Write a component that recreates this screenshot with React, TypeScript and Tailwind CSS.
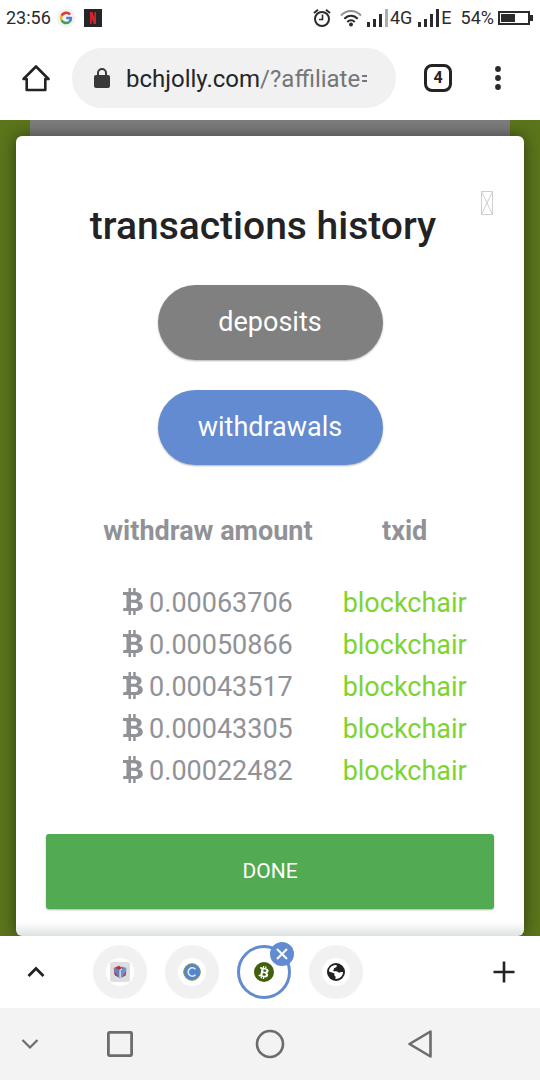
import React from "react";

const withdrawals = ["0.00063706", "0.00050866", "0.00043517", "0.00043305", "0.00022482"];

function BitcoinSign({ className }: { className: string }) {
  return (
    <svg viewBox="0 0 20 27" className={className} fill="currentColor" aria-hidden="true">
      <path
        fillRule="evenodd"
        d="M0 4H11.500C16 4 18.600 5.800 18.600 8.800C18.600 11 17.400 12.500 15 13.100C18.200 13.800 19.800 15.400 19.800 18C19.800 21.400 17 23 12.500 23H0L.5 20H2.200C3 20 3.500 19.700 3.500 19V8.200C3.500 7.300 2.900 7 2 7H0ZM8 7.200V11.800H10.500C13 11.800 14 11 14 9.500S13 7.200 10.500 7.200ZM8 14.800V20H11C13.800 20 15 19 15 17.400S13.800 14.800 11 14.800Z"
      />
      <path d="M5.500 0H8V4.500H5.500ZM10.200 0H12.700V4.500H10.200ZM5.500 22.500H8V27H5.500ZM10.200 22.500H12.700V27H10.200Z" />
    </svg>
  );
}

function SignalBars({ weak = false }: { weak?: boolean }) {
  return (
    <svg viewBox="0 0 23 18" className="h-[18px] w-[23px]" fill="#2b2b2d" aria-hidden="true">
      <rect x="0" y="13" width="3" height="5" />
      <rect x="6" y="10" width="3" height="8" />
      <rect x="12" y="5" width="3" height="13" />
      <rect x="18" y="0" width="3" height="18" fill={weak ? "#aeaeae" : "#2b2b2d"} />
    </svg>
  );
}

function StatusBar() {
  return (
    <div className="flex h-9 items-center justify-between px-[6px] text-lg text-[#2b2b2d]">
      <div className="flex items-center">
        <span className="w-[50px]">23:56</span>
        <svg viewBox="0 0 20 20" className="h-5 w-5" aria-hidden="true">
          <circle cx="10" cy="10" r="9.5" fill="#f3f3f3" />
          <g fill="none" strokeWidth="2.6">
            <path d="M14 6.6A5 5 0 0 0 5.6 7.8" stroke="#d8402f" />
            <path d="M5.6 7.8a5 5 0 0 0 0 4.4" stroke="#e9b63a" />
            <path d="M5.6 12.2a5 5 0 0 0 7.6 1.7" stroke="#3f9f55" />
            <path d="M13.2 13.9A4.8 4.8 0 0 0 14.9 10H10.2" stroke="#4f7fd0" />
          </g>
        </svg>
        <svg viewBox="0 0 18 18" className="ml-2 h-[18px] w-[18px]" aria-hidden="true">
          <rect width="18" height="18" fill="#26262a" />
          <path d="M6 3h2.400l2 5.500V3H12v12H9.800L7.700 9.500V15H6z" fill="#d52428" />
        </svg>
      </div>
      <div className="flex items-center">
        <svg viewBox="0 0 20 20" className="h-5 w-5" fill="none" stroke="#2b2b2d" strokeWidth="2" aria-hidden="true">
          <circle cx="10" cy="11" r="7" />
          <path d="M10.500 6.500V11.500H7" strokeWidth="1.600" />
          <path d="M2 5 6 1.800M18 5l-4-3.200" />
        </svg>
        <svg viewBox="0 0 22 18" className="ml-2 h-[18px] w-[22px]" fill="none" strokeWidth="2" aria-hidden="true">
          <path d="M1 6.500C6.500.500 15.500.500 21 6.500" stroke="#909090" />
          <path d="M4.300 9.800C8.200 5.600 13.800 5.600 17.700 9.800" stroke="#2b2b2d" />
          <path d="M7.300 13C9.500 10.700 12.500 10.700 14.700 13" stroke="#2b2b2d" />
          <circle cx="11" cy="15.500" r="2" fill="#2b2b2d" />
        </svg>
        <span className="ml-[5px] flex items-center"><SignalBars weak />4G</span>
        <span className="ml-[6px] flex items-center"><SignalBars />E</span>
        <span className="ml-[9px]">54%</span>
        <svg viewBox="0 0 36 14" className="ml-1 h-[14px] w-9" aria-hidden="true">
          <rect x="1" y="1" width="30" height="12" fill="#fff" stroke="#2b2b2d" strokeWidth="2" />
          <rect x="3" y="3" width="14" height="8" fill="#2b2b2d" />
          <rect x="32" y="4" width="3" height="6" fill="#2b2b2d" />
        </svg>
      </div>
    </div>
  );
}

function BrowserBar() {
  return (
    <header className="flex h-[84px] items-center pr-6">
      <button type="button" aria-label="Home" className="flex w-[72px] justify-center">
        <svg viewBox="0 0 28 28" className="h-7 w-7" fill="none" stroke="#232326" strokeWidth="2.600" strokeLinejoin="round" aria-hidden="true">
          <path d="M1.500 15 14 2.500 26.500 15H23.300V26H4.700V15z" />
        </svg>
      </button>
      <div className="flex h-[60px] min-w-0 flex-1 items-center rounded-full bg-[#f1f1f1] pl-[22px]">
        <svg viewBox="0 0 16 20" className="h-5 w-4 shrink-0" aria-hidden="true">
          <rect y="7" width="16" height="13" rx="2" fill="#39393c" />
          <path d="M4 8V5a4 4 0 0 1 8 0v3" fill="none" stroke="#39393c" strokeWidth="2" />
        </svg>
        <a href="#" className="ml-4 mr-[29px] flex-1 overflow-hidden whitespace-nowrap pt-[2px] text-2xl text-[#252528]">
          bchjolly.com<span className="text-[#75757a]">/?affiliate=</span>
        </a>
      </div>
      <button type="button" aria-label="Open tabs" className="ml-7 flex h-7 w-7 items-center justify-center rounded-lg border-3 border-[#232326] text-base font-bold text-[#232326]">
        4
      </button>
      <button type="button" aria-label="More options" className="ml-7 flex w-9 justify-center">
        <svg viewBox="0 0 6 24" className="h-6 w-[6px]" fill="#2b2b2d" aria-hidden="true">
          <circle cx="3" cy="3" r="2.900" />
          <circle cx="3" cy="12" r="2.900" />
          <circle cx="3" cy="21" r="2.900" />
        </svg>
      </button>
    </header>
  );
}

function HistoryCard() {
  return (
    <section className="relative flex flex-col items-center rounded-md bg-white bg-linear-to-t from-[#dfe2e2] to-white to-[14px] px-[30px] pb-[27px] shadow-[0_0_16px_rgba(0,0,0,0.5)]">
      <button type="button" aria-label="Close" className="absolute right-[31px] top-[55px]">
        <svg viewBox="0 0 12 24" className="h-6 w-3" fill="none" stroke="#cfcfcf" aria-hidden="true">
          <path d="M.5.5h11v23H.5zM.5.5l11 23M11.500.5l-11 23" />
        </svg>
      </button>
      <h1 className="mt-[65px] pr-[14px] text-[39px] leading-[50px] font-medium text-[#232326]">transactions history</h1>
      <button type="button" className="mt-[34px] h-[75px] w-[225px] rounded-full bg-[#808080] text-[27px] text-white shadow-[0_1px_2px_rgba(0,0,0,0.3)]">
        deposits
      </button>
      <button type="button" className="mt-[30px] h-[75px] w-[225px] rounded-full bg-[#638bd1] text-[27px] text-white shadow-[0_1px_2px_rgba(0,0,0,0.3)]">
        withdrawals
      </button>
      <table className="ml-[30px] mt-[45px] text-center text-[27px] leading-[42px] text-[#919297]">
        <thead>
          <tr>
            <th className="px-[15px] pb-[30px] font-bold">withdraw amount</th>
            <th className="px-[15px] pb-[30px] font-bold">txid</th>
          </tr>
        </thead>
        <tbody>
          {withdrawals.map((amount) => (
            <tr key={amount}>
              <td className="px-[15px]">
                <span className="flex items-center justify-center gap-[6px]">
                  <BitcoinSign className="mb-[3px] h-[27px] w-5" />
                  {amount}
                </span>
              </td>
              <td className="px-[15px]">
                <a href="#" className="text-[#7fd32f]">blockchair</a>
              </td>
            </tr>
          ))}
        </tbody>
      </table>
      <button type="button" className="mt-[42px] h-[75px] w-full rounded-[3px] bg-[#52aa52] text-[21px] text-white shadow-[0_1px_2px_rgba(0,0,0,0.3)]">
        DONE
      </button>
    </section>
  );
}

const tabClass = "flex h-[54px] w-[54px] items-center justify-center rounded-full bg-[#f1f1f1]";
const tabInner = "flex h-7 w-7 items-center justify-center rounded-full bg-white";

function TabStrip() {
  return (
    <nav aria-label="Tabs" className="flex h-[72px] items-center bg-white text-[#232326]">
      <button type="button" aria-label="Expand tabs" className="flex w-[72px] justify-center">
        <svg viewBox="0 0 18 12" className="h-3 w-[18px]" fill="none" stroke="currentColor" strokeWidth="2.800" aria-hidden="true">
          <path d="m1.500 10 7.500-7.500 7.500 7.500" />
        </svg>
      </button>
      <div className="ml-[21px] flex items-center gap-[18px]">
        <button type="button" aria-label="Tab 1" className={tabClass}>
          <span className={tabInner}>
            <svg viewBox="0 0 20 20" className="h-5 w-5" aria-hidden="true">
              <rect width="20" height="20" rx="3" fill="#dedede" />
              <path d="M3.500 6 10 8.500v8L5 13z" fill="#5f82bd" />
              <path d="M16.500 6 10 8.500v8l5.500-3.500z" fill="#6c92cc" />
              <path d="M4 6 9 3.800 12 6 9 8z" fill="#b82d40" />
              <path d="M11 4.500 16.500 6 12 7.800z" fill="#5f82bd" />
              <path d="M3.600 9 8.500 15 5 13.500zM16.500 9l-4.500 6.500 3.500-2z" fill="#c22d42" />
              <path d="M9.500 8.500h1.200V16H9.500z" fill="#f4eeee" />
            </svg>
          </span>
        </button>
        <button type="button" aria-label="Tab 2" className={tabClass}>
          <span className={tabInner}>
            <svg viewBox="0 0 20 20" className="h-5 w-5" fill="none" aria-hidden="true">
              <circle cx="10" cy="10" r="8.300" fill="#5585cf" stroke="#82963f" strokeWidth="1" />
              <path d="M13.500 7.200a4.200 4.200 0 1 0 0 5.600" stroke="#e2ebf8" strokeWidth="1.500" />
            </svg>
          </span>
        </button>
        <div className="relative">
          <button type="button" aria-label="Current tab" className="flex h-[54px] w-[54px] items-center justify-center rounded-full border-3 border-[#638bd1] bg-white">
            <span className="flex h-5 w-5 items-center justify-center rounded-full bg-[#41600f] text-white">
              <BitcoinSign className="h-[13px] w-[10px] rotate-12" />
            </span>
          </button>
          <button type="button" aria-label="Close tab" className="absolute -right-[3px] -top-[3px] flex h-6 w-6 items-center justify-center rounded-full bg-[#638bd1]">
            <svg viewBox="0 0 12 12" className="h-3 w-3" stroke="#fff" strokeWidth="2" aria-hidden="true">
              <path d="m1 1 10 10M11 1 1 11" />
            </svg>
          </button>
        </div>
        <button type="button" aria-label="Tab 4" className={tabClass}>
          <span className={tabInner}>
            <svg viewBox="0 0 18 18" className="h-[18px] w-[18px]" aria-hidden="true">
              <circle cx="9" cy="9" r="9" fill="#202124" />
              <path d="M2 8.500C2 4.500 5 2 9.500 2c1 1.500-.500 2.500-2 3C6.500 5.500 7 7 6 8c1.500.500 4-.500 5 1 .500 1 2 1 2.500 0H16c0 4-3 7-7.500 7-.500-1 .500-1.500 0-2.500C7.500 13 7 12 7.500 10.500 6 9.500 4 9.500 2 8.500z" fill="#fff" />
            </svg>
          </span>
        </button>
      </div>
      <button type="button" aria-label="New tab" className="ml-auto flex w-[72px] justify-center">
        <svg viewBox="0 0 22 22" className="h-[22px] w-[22px]" stroke="currentColor" strokeWidth="2.600" aria-hidden="true">
          <path d="M11 .5v21M.5 11h21" />
        </svg>
      </button>
    </nav>
  );
}

function SystemNav() {
  return (
    <nav aria-label="System" className="flex h-[72px] items-center bg-[#f3f3f3] text-[#6c6c6c]">
      <button type="button" aria-label="Hide" className="flex w-[60px] justify-center">
        <svg viewBox="0 0 18 12" className="h-3 w-[18px]" fill="none" stroke="currentColor" strokeWidth="2.200" aria-hidden="true">
          <path d="m1.500 2 7.500 7.500 7.500-7.500" />
        </svg>
      </button>
      <div className="grid flex-1 grid-cols-3 pr-[30px]">
        <button type="button" aria-label="Recents" className="mr-[30px] flex items-center justify-center">
          <svg viewBox="0 0 28 28" className="h-7 w-7" fill="none" stroke="currentColor" strokeWidth="2.800" aria-hidden="true">
            <rect x="2.400" y="2.400" width="23.200" height="23.200" rx="1" />
          </svg>
        </button>
        <button type="button" aria-label="Home screen" className="mr-[30px] flex items-center justify-center">
          <svg viewBox="0 0 30 30" className="h-[30px] w-[30px]" fill="none" stroke="currentColor" strokeWidth="2.600" aria-hidden="true">
            <circle cx="15" cy="15" r="13" />
          </svg>
        </button>
        <button type="button" aria-label="Back" className="mr-[30px] flex items-center justify-center">
          <svg viewBox="0 0 28 28" className="h-7 w-7" fill="none" stroke="currentColor" strokeWidth="2.600" strokeLinejoin="round" aria-hidden="true">
            <path d="M24.500 1.500v25L3.500 14z" />
          </svg>
        </button>
      </div>
    </nav>
  );
}

export default function App() {
  return (
    <div className="flex min-h-screen flex-col bg-white font-[Roboto,sans-serif]">
      <StatusBar />
      <BrowserBar />
      <main className="flex-1 overflow-hidden bg-[#5b751b]">
        <div className="mx-[30px] h-4 bg-[#7d7d7d]" />
        <div className="mx-4">
          <HistoryCard />
        </div>
      </main>
      <TabStrip />
      <SystemNav />
    </div>
  );
}
